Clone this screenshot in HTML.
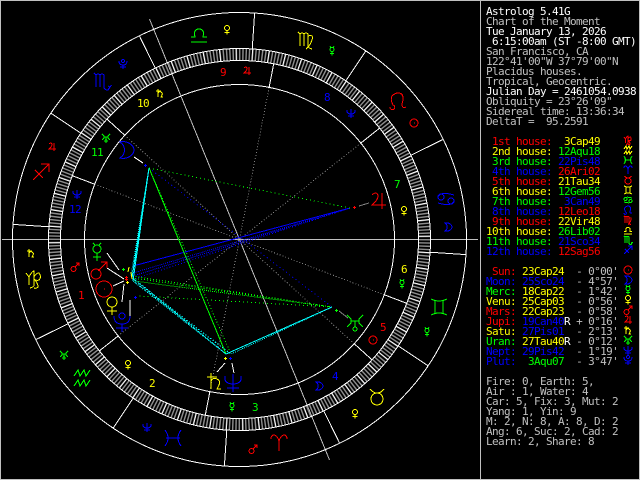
<!DOCTYPE html>
<html>
<head>
<meta charset="utf-8">
<title>Astrolog 5.41G</title>
<style>
html,body{margin:0;padding:0;background:#000;width:640px;height:480px;overflow:hidden}
svg{display:block}
text{font-family:"DejaVu Sans Mono","Liberation Mono",monospace;font-size:11px;letter-spacing:-.62px;white-space:pre}
.r{fill:#f00}.y{fill:#ff0}.g{fill:#0f0}.b{fill:#00f}.w{fill:#fff}.s{fill:#c0c0c0}
.c text{text-anchor:middle}
path{fill:none;stroke-width:1;vector-effect:non-scaling-stroke;shape-rendering:crispEdges}
.R{stroke:#f00}.Y{stroke:#ff0}.G{stroke:#0f0}.B{stroke:#00f}
line{shape-rendering:crispEdges}
</style>
</head>
<body>
<svg width="640" height="480" viewBox="0 0 640 480" xmlns="http://www.w3.org/2000/svg">
<rect width="640" height="480" fill="#000"/>
<rect x="0.5" y="0.5" width="639" height="479" fill="none" stroke="#c0c0c0" shape-rendering="crispEdges"/>
<line x1="480.5" y1="0" x2="480.5" y2="480" stroke="#c0c0c0"/>

<!-- Axes -->
<g stroke="#c0c0c0">
<line x1="2" y1="239.5" x2="478" y2="239.5"/>
<line x1="1.5" y1="239.5" x2="477.5" y2="239.5" transform="rotate(67.79 239.5 239.5)"/>
</g>

<!-- Dotted house cusps -->
<g stroke="#808080" stroke-dasharray="1 2">
<line x1="84.5" y1="239.5" x2="239.5" y2="239.5" transform="rotate(-38.48 239.5 239.5)"/>
<line x1="84.5" y1="239.5" x2="239.5" y2="239.5" transform="rotate(-78.98 239.5 239.5)"/>
<line x1="84.5" y1="239.5" x2="239.5" y2="239.5" transform="rotate(-137.75 239.5 239.5)"/>
<line x1="84.5" y1="239.5" x2="239.5" y2="239.5" transform="rotate(-159.11 239.5 239.5)"/>
<line x1="84.5" y1="239.5" x2="239.5" y2="239.5" transform="rotate(-218.48 239.5 239.5)"/>
<line x1="84.5" y1="239.5" x2="239.5" y2="239.5" transform="rotate(-258.98 239.5 239.5)"/>
<line x1="84.5" y1="239.5" x2="239.5" y2="239.5" transform="rotate(42.25 239.5 239.5)"/>
<line x1="84.5" y1="239.5" x2="239.5" y2="239.5" transform="rotate(20.89 239.5 239.5)"/>
</g>

<!-- Aspects -->
<g stroke="#00f">
<line x1="350" y1="208" x2="133" y2="266"/>
<line x1="350" y1="208" x2="133" y2="273" stroke-dasharray="1 1"/>
<line x1="350" y1="208" x2="133" y2="276" stroke-dasharray="1 1"/>
<line x1="350" y1="208" x2="134" y2="279" stroke-dasharray="1 2"/>
<line x1="149" y1="168" x2="332" y2="307" stroke-dasharray="1 3"/>
</g>
<g stroke="#0f0">
<line x1="149" y1="168" x2="226" y2="354"/>
<line x1="149" y1="168" x2="231" y2="354" stroke-dasharray="1 2"/>
<line x1="149" y1="168" x2="350" y2="208" stroke-dasharray="1 3"/>
<line x1="332" y1="307" x2="133" y2="278" stroke-dasharray="1 2"/>
<line x1="332" y1="307" x2="134" y2="281" stroke-dasharray="1 1"/>
<line x1="332" y1="307" x2="132" y2="276" stroke-dasharray="1 2"/>
<line x1="332" y1="307" x2="139" y2="296" stroke-dasharray="1 3"/>
</g>
<g stroke="#0ff">
<line x1="149" y1="168" x2="133" y2="281"/>
<line x1="149" y1="168" x2="132" y2="278"/>
<line x1="149" y1="168" x2="131" y2="276" stroke-dasharray="1 1"/>
<line x1="149" y1="168" x2="134" y2="268" stroke-dasharray="1 2"/>
<line x1="332" y1="307" x2="226" y2="354"/>
<line x1="332" y1="307" x2="231" y2="354" stroke-dasharray="1 1"/>
<line x1="133" y1="281" x2="226" y2="354" stroke-dasharray="1 1"/>
<line x1="132" y1="278" x2="226" y2="354" stroke-dasharray="1 1"/>
<line x1="131" y1="276" x2="226" y2="354" stroke-dasharray="1 2"/>
<line x1="133" y1="281" x2="231" y2="354" stroke-dasharray="1 2"/>
<line x1="132" y1="278" x2="231" y2="354" stroke-dasharray="1 2"/>
</g>
<line x1="129" y1="267" x2="128" y2="272" stroke="#ff0"/>
<line x1="131" y1="272" x2="132" y2="279" stroke="#ff0"/>

<!-- Rings -->
<g fill="none">
<circle cx="239.5" cy="239.5" r="185" stroke="#8c8c8c" stroke-width="12" pathLength="360" stroke-dasharray=".45 .55" transform="rotate(183.82 239.5 239.5)"/>
<circle cx="239.5" cy="239.5" r="185" stroke="#fff" stroke-width="12" pathLength="360" stroke-dasharray=".3 4.7" transform="rotate(183.82 239.5 239.5)"/>
<g stroke="#fff" shape-rendering="crispEdges">
<circle cx="239.5" cy="239.5" r="227"/>
<circle cx="239.5" cy="239.5" r="191"/>
<circle cx="239.5" cy="239.5" r="179"/>
<circle cx="239.5" cy="239.5" r="155"/>
</g>
</g>

<!-- House cusps in ring -->
<g stroke="#fff">
<line x1="84.5" y1="239.5" x2="60.5" y2="239.5" transform="rotate(-38.48 239.5 239.5)"/>
<line x1="84.5" y1="239.5" x2="60.5" y2="239.5" transform="rotate(-78.98 239.5 239.5)"/>
<line x1="84.5" y1="239.5" x2="60.5" y2="239.5" transform="rotate(-137.75 239.5 239.5)"/>
<line x1="84.5" y1="239.5" x2="60.5" y2="239.5" transform="rotate(-159.11 239.5 239.5)"/>
<line x1="84.5" y1="239.5" x2="60.5" y2="239.5" transform="rotate(-218.48 239.5 239.5)"/>
<line x1="84.5" y1="239.5" x2="60.5" y2="239.5" transform="rotate(-258.98 239.5 239.5)"/>
<line x1="84.5" y1="239.5" x2="60.5" y2="239.5" transform="rotate(42.25 239.5 239.5)"/>
<line x1="84.5" y1="239.5" x2="60.5" y2="239.5" transform="rotate(20.89 239.5 239.5)"/>
<!-- Sign boundaries -->
<line x1="48.5" y1="239.5" x2="12.5" y2="239.5" transform="rotate(3.82 239.5 239.5)"/>
<line x1="48.5" y1="239.5" x2="12.5" y2="239.5" transform="rotate(33.82 239.5 239.5)"/>
<line x1="48.5" y1="239.5" x2="12.5" y2="239.5" transform="rotate(63.82 239.5 239.5)"/>
<line x1="48.5" y1="239.5" x2="12.5" y2="239.5" transform="rotate(93.82 239.5 239.5)"/>
<line x1="48.5" y1="239.5" x2="12.5" y2="239.5" transform="rotate(123.82 239.5 239.5)"/>
<line x1="48.5" y1="239.5" x2="12.5" y2="239.5" transform="rotate(153.82 239.5 239.5)"/>
<line x1="48.5" y1="239.5" x2="12.5" y2="239.5" transform="rotate(183.82 239.5 239.5)"/>
<line x1="48.5" y1="239.5" x2="12.5" y2="239.5" transform="rotate(213.82 239.5 239.5)"/>
<line x1="48.5" y1="239.5" x2="12.5" y2="239.5" transform="rotate(243.82 239.5 239.5)"/>
<line x1="48.5" y1="239.5" x2="12.5" y2="239.5" transform="rotate(273.82 239.5 239.5)"/>
<line x1="48.5" y1="239.5" x2="12.5" y2="239.5" transform="rotate(303.82 239.5 239.5)"/>
<line x1="48.5" y1="239.5" x2="12.5" y2="239.5" transform="rotate(333.82 239.5 239.5)"/>
<!-- Planet connectors -->
<line x1="134" y1="157" x2="143" y2="163"/>
<line x1="217" y1="372" x2="225" y2="363"/>
<line x1="232" y1="363" x2="234" y2="373"/>
<line x1="107" y1="253" x2="119" y2="270"/>
<line x1="107" y1="268" x2="124" y2="279"/>
<line x1="113" y1="286" x2="124" y2="281"/>
<line x1="122" y1="302" x2="124" y2="284"/>
<line x1="130" y1="317" x2="130" y2="300"/>
<line x1="359" y1="206" x2="369" y2="203" stroke="#808080"/>
<line x1="339" y1="311" x2="348" y2="318" stroke="#808080"/>
</g>

<!-- Plus marks -->
<path class="B" d="M144 165.500h3M145.500 164v3"/>
<path class="R" d="M353 207.500h3M354.500 206v3"/>
<path class="G" d="M335 310.500h3M336.500 309v3"/>
<path class="Y" d="M224 358.500h3M225.500 357v3"/>
<path class="B" d="M229 358.500h3M230.500 357v3"/>
<path class="G" d="M122 269.500h3M123.500 268v3"/>
<path class="R" d="M125 277.500h3M126.500 276v3"/>
<path class="R" d="M125 279.500h3M126.500 278v3"/>
<path class="Y" d="M126 282.500h3M127.500 281v3"/>
<path class="B" d="M134 297.500h3M135.500 296v3"/>

<!-- Zodiac signs in outer ring -->
<g stroke-linejoin="miter">
<path class="G" transform="translate(199 34) scale(2)" d="M-4 4H4M-4 1.500H-2Q-3-2.500 0-2.500Q3-2.500 2 1.500H4"/>
<path class="Y" transform="translate(306 40) scale(2)" d="M-4-4L-3-3V3M-3-3Q-2-4-1-3V3M-1-3Q0-4 1-3V3Q1 4 3 4.500M1-2Q4-3 3 0Q2 3 0 4.500"/>
<path class="R" transform="translate(398 101) scale(2)" d="M-4 3A1.200 1.200 0 1 0-2.500 2Q-4-1-3-2.500Q-1.500-4 0-4Q2.500-4 2.500-1.500Q2.500 0 2 1.500Q2 4 4 3"/>
<path class="B" transform="translate(446 199) scale(2)" d="M-4-1a1.500 1.500 0 1 0 3 0a1.500 1.500 0 1 0-3 0M-4-1Q-3-4 4-2M1 1a1.500 1.500 0 1 0 3 0a1.500 1.500 0 1 0-3 0M4 1Q3 4-4 2"/>
<path class="G" transform="translate(439 307) scale(2)" d="M-4-4Q0-2 4-4M-4 4Q0 2 4 4M-2-3V3M2-3V3"/>
<path class="Y" transform="translate(377 397) scale(2)" d="M-3.500-4Q-2-2 0-2Q2-2 3.500-4M-3 1a3 3 0 1 0 6 0a3 3 0 1 0-6 0"/>
<path class="R" transform="translate(279 443) scale(2)" d="M-4-2Q-4-4-2.500-4Q-1-4 0-1V4M0-1Q1-4 2.500-4Q4-4 4-2"/>
<path class="B" transform="translate(173 438) scale(2)" d="M-4-4Q-1 0-4 4M4-4Q1 0 4 4M-3.500 0H3.500"/>
<path class="G" transform="translate(82 378) scale(2)" d="M-4-1L-2-4L-1-1L1-4L2-1L4-4M-4 4L-2 1L-1 4L1 1L2 4L4 1"/>
<path class="Y" transform="translate(34 279) scale(2)" d="M-4-3L-2.500-1V3M-2.500-1Q-1-4 0-4V3Q0 4-2 4.500M0-1Q1-3 2.500-3Q4-1 2.500 .5Q1 1 0 0Q2 2 2 4Q1 5 0 4.500"/>
<path class="R" transform="translate(41 172) scale(2)" d="M-4 4L4-4M0-4H4V0M-3-1L1 3"/>
<path class="B" transform="translate(102 81) scale(2)" d="M-4-4L-3-3V3M-3-3Q-2-4-1-3V3M-1-3Q0-4 1-3V3Q1 4.500 3 4.500L4 3M3 2.500L4 3L4.700 2"/>
</g>

<!-- Small rulers in outer ring -->
<path class="Y" transform="translate(227 30)" d="M-2.500-2a2.500 2.500 0 1 0 5 0a2.500 2.500 0 1 0-5 0M0 .5V4.500M-2.500 2.500H2.500"/>
<path class="G" transform="translate(332 51)" d="M-2-4.500L-1-3.500M2-4.500L1-3.500M-2-1.500a2 2 0 1 0 4 0a2 2 0 1 0-4 0M0 .5V4.500M-2 2.500H2"/>
<path class="R" transform="translate(414 123)" d="M-4 0a4 4 0 1 0 8 0a4 4 0 1 0-8 0M0 0h1"/>
<path class="B" transform="translate(448 227)" d="M-3-4C1-5 4-2 4 0C4 2 1 5-3 4C0 2 0-2-3-4Z"/>
<path class="G" transform="translate(427 332)" d="M-2-4.500L-1-3.500M2-4.500L1-3.500M-2-1.500a2 2 0 1 0 4 0a2 2 0 1 0-4 0M0 .5V4.500M-2 2.500H2"/>
<path class="Y" transform="translate(355 414)" d="M-2.500-2a2.500 2.500 0 1 0 5 0a2.500 2.500 0 1 0-5 0M0 .5V4.500M-2.500 2.500H2.500"/>
<path class="R" transform="translate(253 449)" d="M-4 2a2.500 2.500 0 1 0 5 0a2.500 2.500 0 1 0-5 0M-.5 .5L4-4M1-4H4V-1"/>
<path class="B" transform="translate(147 427)" d="M-4-3V-1Q-3 1 0 1Q3 1 4-1V-3M0-4V5M-3 3H3"/>
<path class="G" transform="translate(64 355)" d="M-4-4L-2-2V0L-4 2M4-4L2-2V0L4 2M-2-1H2M0-1V2M-1 3a1 1 0 1 0 2 0a1 1 0 1 0-2 0"/>
<path class="Y" transform="translate(31 253)" d="M-2-4V4M-4-2H1M-2 0Q-1-2 1-1Q3 0 2 2L1 4H3"/>
<path class="R" transform="translate(52 147)" d="M-3-3Q-2-4-1-4Q1-3-1 0L-3 2H4M2-4V4"/>
<path class="B" transform="translate(123 64)" d="M-1.500-3a1.500 1.500 0 1 0 3 0a1.500 1.500 0 1 0-3 0M-4-3Q-4 1 0 1Q4 1 4-3M0 1V5M-3 3H3"/>

<!-- Small rulers in house ring -->
<path class="R" transform="translate(247 71)" d="M-3-3Q-2-4-1-4Q1-3-1 0L-3 2H4M2-4V4"/>
<path class="Y" transform="translate(160 93)" d="M-2-4V4M-4-2H1M-2 0Q-1-2 1-1Q3 0 2 2L1 4H3"/>
<path class="G" transform="translate(106 138)" d="M-4-4L-2-2V0L-4 2M4-4L2-2V0L4 2M-2-1H2M0-1V2M-1 3a1 1 0 1 0 2 0a1 1 0 1 0-2 0"/>
<path class="B" transform="translate(77 194)" d="M-4-3V-1Q-3 1 0 1Q3 1 4-1V-3M0-4V5M-3 3H3"/>
<path class="R" transform="translate(75 267)" d="M-4 2a2.500 2.500 0 1 0 5 0a2.500 2.500 0 1 0-5 0M-.5 .5L4-4M1-4H4V-1"/>
<path class="Y" transform="translate(128 365)" d="M-2.500-2a2.500 2.500 0 1 0 5 0a2.500 2.500 0 1 0-5 0M0 .5V4.500M-2.500 2.500H2.500"/>
<path class="G" transform="translate(232 407)" d="M-2-4.500L-1-3.500M2-4.500L1-3.500M-2-1.500a2 2 0 1 0 4 0a2 2 0 1 0-4 0M0 .5V4.500M-2 2.500H2"/>
<path class="B" transform="translate(319 386)" d="M-3-4C1-5 4-2 4 0C4 2 1 5-3 4C0 2 0-2-3-4Z"/>
<path class="R" transform="translate(373 340)" d="M-4 0a4 4 0 1 0 8 0a4 4 0 1 0-8 0M0 0h1"/>
<path class="G" transform="translate(402 284)" d="M-2-4.500L-1-3.500M2-4.500L1-3.500M-2-1.500a2 2 0 1 0 4 0a2 2 0 1 0-4 0M0 .5V4.500M-2 2.500H2"/>
<path class="Y" transform="translate(404 211)" d="M-2.500-2a2.500 2.500 0 1 0 5 0a2.500 2.500 0 1 0-5 0M0 .5V4.500M-2.500 2.500H2.500"/>
<path class="B" transform="translate(351 113)" d="M-4-3V-1Q-3 1 0 1Q3 1 4-1V-3M0-4V5M-3 3H3"/>

<!-- Large planets -->
<path class="B" transform="translate(126 150) scale(2)" d="M-3-4C1-5 4-2 4 0C4 2 1 5-3 4C0 2 0-2-3-4Z"/>
<path class="R" transform="translate(378 201) scale(2)" d="M-3-3Q-2-4-1-4Q1-3-1 0L-3 2H4M2-4V4"/>
<path class="G" transform="translate(355 323) scale(2)" d="M-4-4L-2-2V0L-4 2M4-4L2-2V0L4 2M-2-1H2M0-1V2M-1 3a1 1 0 1 0 2 0a1 1 0 1 0-2 0"/>
<path class="Y" transform="translate(215 381) scale(2)" d="M-2-4V4M-4-2H1M-2 0Q-1-2 1-1Q3 0 2 2L1 4H3"/>
<path class="B" transform="translate(233 382) scale(2)" d="M-4-3V-1Q-3 1 0 1Q3 1 4-1V-3M0-4V5M-3 3H3"/>
<path class="G" transform="translate(97 252) scale(2)" d="M-2-4.500L-1-3.500M2-4.500L1-3.500M-2-1.500a2 2 0 1 0 4 0a2 2 0 1 0-4 0M0 .5V4.500M-2 2.500H2"/>
<path class="R" transform="translate(99 270) scale(2)" d="M-4 2a2.500 2.500 0 1 0 5 0a2.500 2.500 0 1 0-5 0M-.5 .5L4-4M1-4H4V-1"/>
<path class="R" transform="translate(104 289) scale(2)" d="M-4 0a4 4 0 1 0 8 0a4 4 0 1 0-8 0M0 0h.5"/>
<path class="Y" transform="translate(112 306) scale(2)" d="M-2.500-2a2.500 2.500 0 1 0 5 0a2.500 2.500 0 1 0-5 0M0 .5V4.500M-2.500 2.500H2.500"/>
<path class="B" transform="translate(122 322) scale(2)" d="M-1.500-3a1.500 1.500 0 1 0 3 0a1.500 1.500 0 1 0-3 0M-4-3Q-4 1 0 1Q4 1 4-3M0 1V5M-3 3H3"/>

<!-- House numbers -->
<g class="c">
<text x="223" y="76" class="r">9</text>
<text x="143" y="107" class="y">10</text>
<text x="97" y="156" class="g">11</text>
<text x="75" y="213" class="b">12</text>
<text x="81" y="299" class="r">1</text>
<text x="152" y="387" class="y">2</text>
<text x="255" y="411" class="g">3</text>
<text x="335" y="380" class="b">4</text>
<text x="383" y="331" class="r">5</text>
<text x="404" y="273" class="y">6</text>
<text x="397" y="188" class="g">7</text>
<text x="327" y="101" class="b">8</text>
</g>

<g transform="translate(0 1)">
<!-- Header text -->
<text x="486" y="14" class="w">Astrolog 5.41G</text>
<text x="486" y="24" class="s">Chart of the Moment</text>
<text x="486" y="34" class="w">Tue January 13, 2026</text>
<text x="486" y="44" class="w"> 6:15:00am (ST -8:00 GMT)</text>
<text x="486" y="54" class="s">San Francisco, CA</text>
<text x="486" y="64" class="s">122°41'00"W 37°79'00"N</text>
<text x="486" y="74" class="s">Placidus houses.</text>
<text x="486" y="84" class="s">Tropical, Geocentric.</text>
<text x="486" y="94" class="w">Julian Day = 2461054.0938</text>
<text x="486" y="104" class="s">Obliquity = 23°26'09"</text>
<text x="486" y="114" class="s">Sidereal time: 13:36:34</text>
<text x="486" y="124" class="s">DeltaT =  95.2591</text>

<!-- Houses -->
<text x="486" y="144" class="r"> 1st house:  <tspan class="y">3Cap49</tspan></text>
<text x="486" y="154" class="y"> 2nd house: <tspan class="g">12Aqu18</tspan></text>
<text x="486" y="164" class="g"> 3rd house: <tspan class="b">22Pis48</tspan></text>
<text x="486" y="174" class="b"> 4th house: <tspan class="r">26Ari02</tspan></text>
<text x="486" y="184" class="r"> 5th house: <tspan class="y">21Tau34</tspan></text>
<text x="486" y="194" class="y"> 6th house: <tspan class="g">12Gem56</tspan></text>
<text x="486" y="204" class="g"> 7th house:  <tspan class="b">3Can49</tspan></text>
<text x="486" y="214" class="b"> 8th house: <tspan class="r">12Leo18</tspan></text>
<text x="486" y="224" class="r"> 9th house: <tspan class="y">22Vir48</tspan></text>
<text x="486" y="234" class="y">10th house: <tspan class="g">26Lib02</tspan></text>
<text x="486" y="244" class="g">11th house: <tspan class="b">21Sco34</tspan></text>
<text x="486" y="254" class="b">12th house: <tspan class="r">12Sag56</tspan></text>

<!-- Planets table -->
<text x="486" y="274" class="r"> Sun: <tspan class="y">23Cap24</tspan>  <tspan class="s">- 0°00'</tspan></text>
<text x="486" y="284" class="b">Moon: <tspan class="b">25Sco24</tspan>  <tspan class="s">- 4°57'</tspan></text>
<text x="486" y="294" class="g">Merc: <tspan class="y">18Cap22</tspan>  <tspan class="s">- 1°42'</tspan></text>
<text x="486" y="304" class="y">Venu: <tspan class="y">25Cap03</tspan>  <tspan class="s">- 0°56'</tspan></text>
<text x="486" y="314" class="r">Mars: <tspan class="y">22Cap23</tspan>  <tspan class="s">- 0°58'</tspan></text>
<text x="486" y="324" class="r">Jupi: <tspan class="b">19Can40</tspan><tspan class="w">R</tspan> <tspan class="s">+ 0°16'</tspan></text>
<text x="486" y="334" class="y">Satu: <tspan class="b">27Pis01</tspan>  <tspan class="s">- 2°13'</tspan></text>
<text x="486" y="344" class="g">Uran: <tspan class="y">27Tau40</tspan><tspan class="w">R</tspan> <tspan class="s">- 0°12'</tspan></text>
<text x="486" y="354" class="b">Nept: <tspan class="b">29Pis42</tspan>  <tspan class="s">- 1°19'</tspan></text>
<text x="486" y="364" class="b">Plut:  <tspan class="g">3Aqu07</tspan>  <tspan class="s">- 3°47'</tspan></text>

<!-- Stats -->
<text x="486" y="384" class="s">Fire: 0, Earth: 5,</text>
<text x="486" y="394" class="s">Air : 1, Water: 4</text>
<text x="486" y="404" class="s">Car: 5, Fix: 3, Mut: 2</text>
<text x="486" y="414" class="s">Yang: 1, Yin: 9</text>
<text x="486" y="424" class="s">M: 2, N: 8, A: 8, D: 2</text>
<text x="486" y="434" class="s">Ang: 6, Suc: 2, Cad: 2</text>
<text x="486" y="444" class="s">Learn: 2, Share: 8</text>
</g>

<!-- Panel sign glyphs -->
<path class="R" transform="translate(628 140)" d="M-4-3L-2.500-1V3M-2.500-1Q-1-4 0-4V3Q0 4-2 4.500M0-1Q1-3 2.500-3Q4-1 2.500 .5Q1 1 0 0Q2 2 2 4Q1 5 0 4.500"/>
<path class="Y" transform="translate(628 150)" d="M-4-1L-2-4L-1-1L1-4L2-1L4-4M-4 4L-2 1L-1 4L1 1L2 4L4 1"/>
<path class="G" transform="translate(628 160)" d="M-4-4Q-1 0-4 4M4-4Q1 0 4 4M-3.500 0H3.500"/>
<path class="B" transform="translate(628 170)" d="M-4-2Q-4-4-2.500-4Q-1-4 0-1V4M0-1Q1-4 2.500-4Q4-4 4-2"/>
<path class="R" transform="translate(628 180)" d="M-3.500-4Q-2-2 0-2Q2-2 3.500-4M-3 1a3 3 0 1 0 6 0a3 3 0 1 0-6 0"/>
<path class="Y" transform="translate(628 190)" d="M-4-4Q0-2 4-4M-4 4Q0 2 4 4M-2-3V3M2-3V3"/>
<path class="G" transform="translate(628 200)" d="M-4-1a1.500 1.500 0 1 0 3 0a1.500 1.500 0 1 0-3 0M-4-1Q-3-4 4-2M1 1a1.500 1.500 0 1 0 3 0a1.500 1.500 0 1 0-3 0M4 1Q3 4-4 2"/>
<path class="B" transform="translate(628 210)" d="M-4 3A1.200 1.200 0 1 0-2.500 2Q-4-1-3-2.500Q-1.500-4 0-4Q2.500-4 2.500-1.500Q2.500 0 2 1.500Q2 4 4 3"/>
<path class="R" transform="translate(628 220)" d="M-4-4L-3-3V3M-3-3Q-2-4-1-3V3M-1-3Q0-4 1-3V3Q1 4 3 4.500M1-2Q4-3 3 0Q2 3 0 4.500"/>
<path class="Y" transform="translate(628 230)" d="M-4 4H4M-4 1.500H-2Q-3-2.500 0-2.500Q3-2.500 2 1.500H4"/>
<path class="G" transform="translate(628 240)" d="M-4-4L-3-3V3M-3-3Q-2-4-1-3V3M-1-3Q0-4 1-3V3Q1 4.500 3 4.500L4 3M3 2.500L4 3L4.700 2"/>
<path class="B" transform="translate(628 250)" d="M-4 4L4-4M0-4H4V0M-3-1L1 3"/>

<!-- Panel planet glyphs -->
<path class="R" transform="translate(628 270)" d="M-4 0a4 4 0 1 0 8 0a4 4 0 1 0-8 0M0 0h1"/>
<path class="B" transform="translate(628 280)" d="M-3-4C1-5 4-2 4 0C4 2 1 5-3 4C0 2 0-2-3-4Z"/>
<path class="G" transform="translate(628 290)" d="M-2-4.500L-1-3.500M2-4.500L1-3.500M-2-1.500a2 2 0 1 0 4 0a2 2 0 1 0-4 0M0 .5V4.500M-2 2.500H2"/>
<path class="Y" transform="translate(628 300)" d="M-2.500-2a2.500 2.500 0 1 0 5 0a2.500 2.500 0 1 0-5 0M0 .5V4.500M-2.500 2.500H2.500"/>
<path class="R" transform="translate(628 310)" d="M-4 2a2.500 2.500 0 1 0 5 0a2.500 2.500 0 1 0-5 0M-.5 .5L4-4M1-4H4V-1"/>
<path class="R" transform="translate(628 320)" d="M-3-3Q-2-4-1-4Q1-3-1 0L-3 2H4M2-4V4"/>
<path class="Y" transform="translate(628 330)" d="M-2-4V4M-4-2H1M-2 0Q-1-2 1-1Q3 0 2 2L1 4H3"/>
<path class="G" transform="translate(628 340)" d="M-4-4L-2-2V0L-4 2M4-4L2-2V0L4 2M-2-1H2M0-1V2M-1 3a1 1 0 1 0 2 0a1 1 0 1 0-2 0"/>
<path class="B" transform="translate(628 350)" d="M-4-3V-1Q-3 1 0 1Q3 1 4-1V-3M0-4V5M-3 3H3"/>
<path class="B" transform="translate(628 360)" d="M-1.500-3a1.500 1.500 0 1 0 3 0a1.500 1.500 0 1 0-3 0M-4-3Q-4 1 0 1Q4 1 4-3M0 1V5M-3 3H3"/>
</svg>
</body>
</html>
